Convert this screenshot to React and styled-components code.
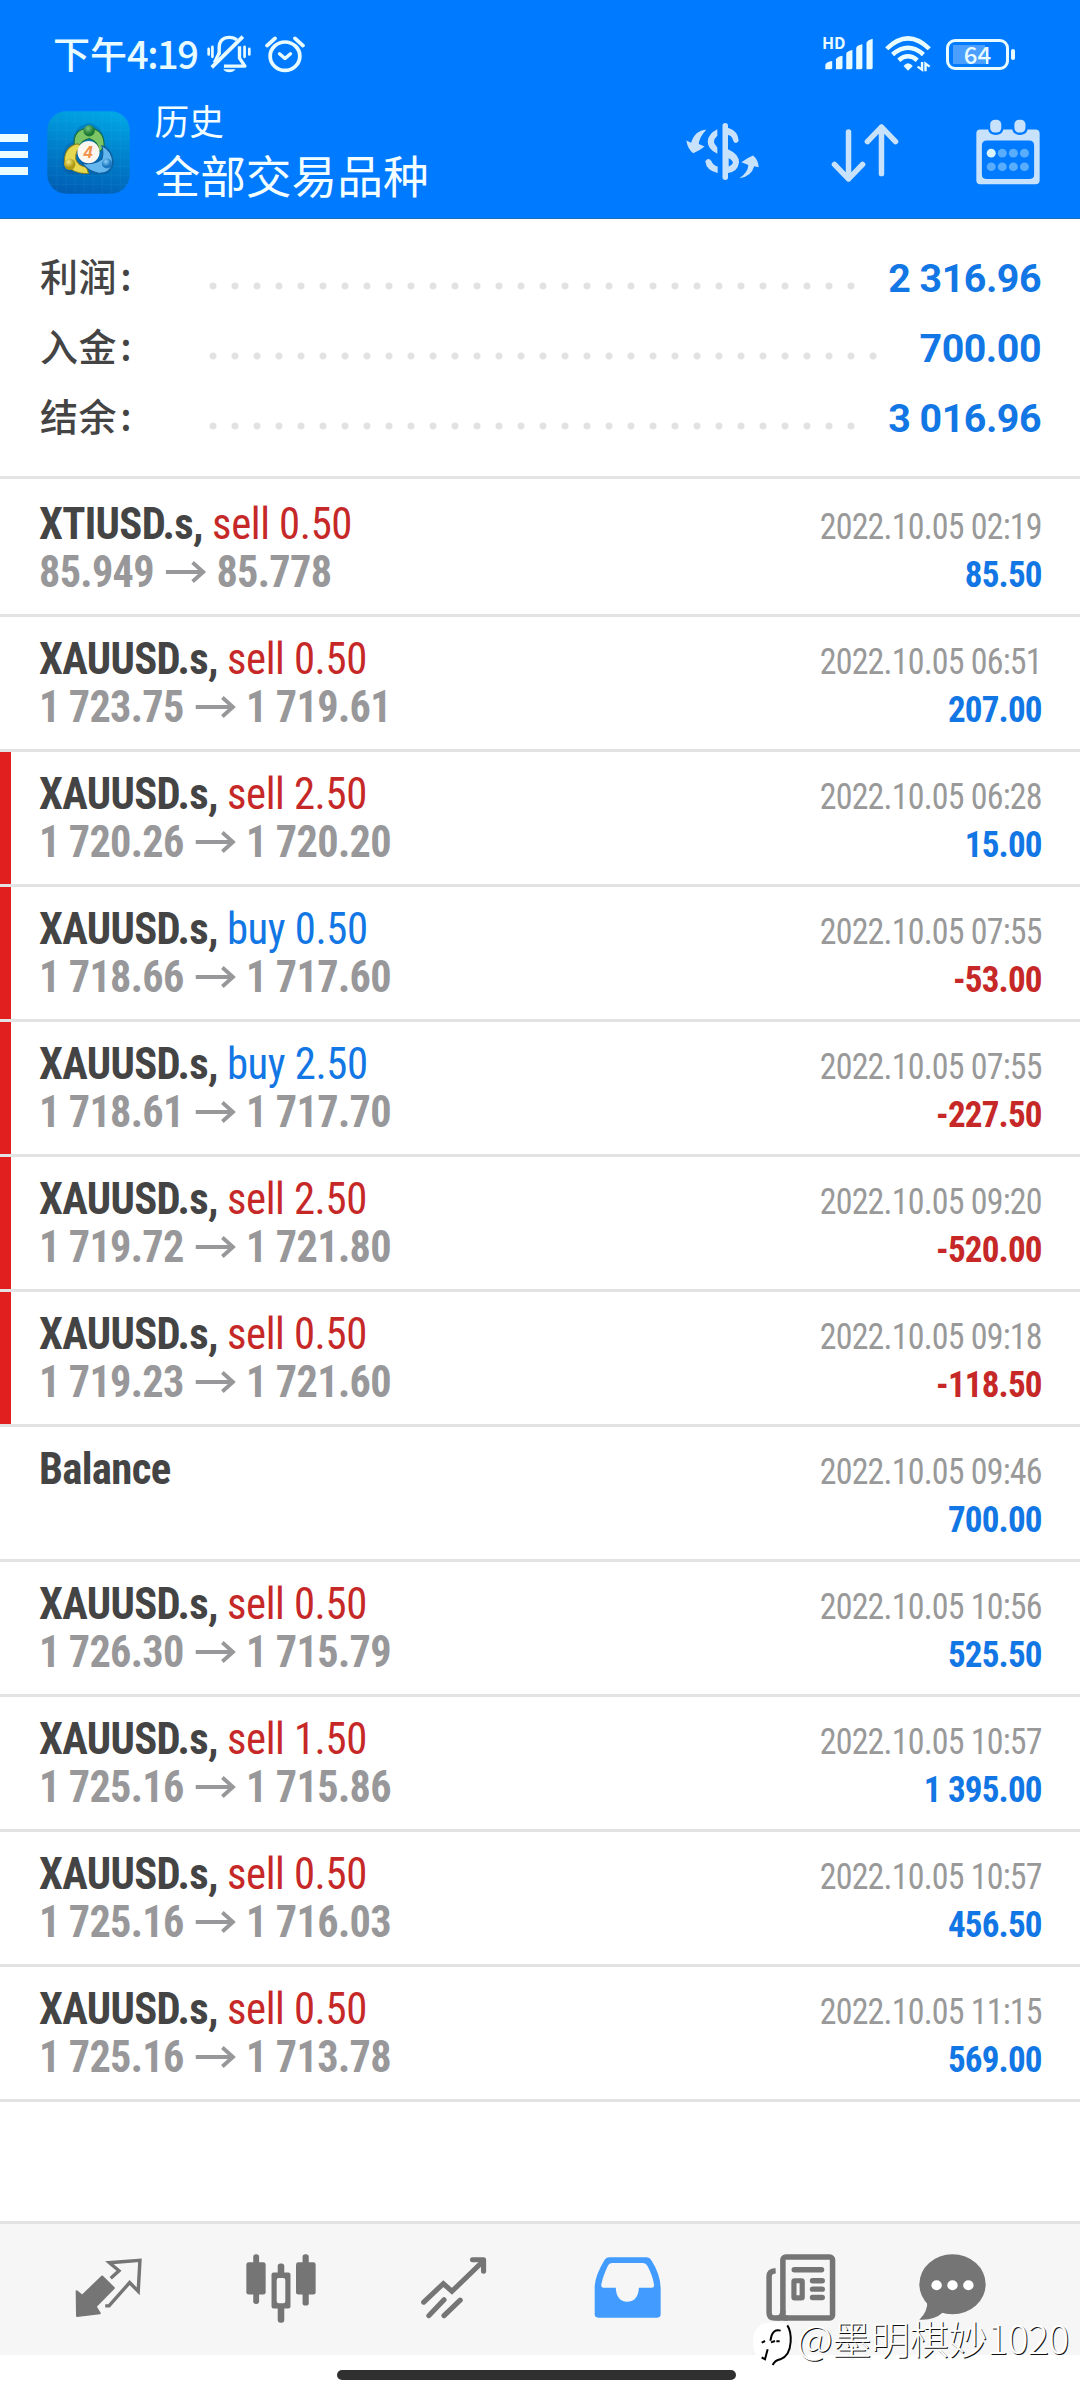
import React from 'react';
import styled, {createGlobalStyle} from 'styled-components';

const GlobalStyle = createGlobalStyle`
  * {
    box-sizing: border-box;
  }

  body {
    margin: 0;
    background-color: #fff;
    font-family: Roboto, 'Noto Sans CJK SC', sans-serif;
  }
`;

const summary = [
  {label: '利润', value: '2 316.96', dots: 30},
  {label: '入金', value: '700.00', dots: 31},
  {label: '结余', value: '3 016.96', dots: 30},
];

const deals = [
  {symbol: 'XTIUSD.s', type: 'sell', lots: '0.50', from: '85.949', to: '85.778', time: '2022.10.05 02:19', profit: '85.50'},
  {symbol: 'XAUUSD.s', type: 'sell', lots: '0.50', from: '1 723.75', to: '1 719.61', time: '2022.10.05 06:51', profit: '207.00'},
  {symbol: 'XAUUSD.s', type: 'sell', lots: '2.50', from: '1 720.26', to: '1 720.20', time: '2022.10.05 06:28', profit: '15.00', marked: true},
  {symbol: 'XAUUSD.s', type: 'buy', lots: '0.50', from: '1 718.66', to: '1 717.60', time: '2022.10.05 07:55', profit: '-53.00', marked: true},
  {symbol: 'XAUUSD.s', type: 'buy', lots: '2.50', from: '1 718.61', to: '1 717.70', time: '2022.10.05 07:55', profit: '-227.50', marked: true},
  {symbol: 'XAUUSD.s', type: 'sell', lots: '2.50', from: '1 719.72', to: '1 721.80', time: '2022.10.05 09:20', profit: '-520.00', marked: true},
  {symbol: 'XAUUSD.s', type: 'sell', lots: '0.50', from: '1 719.23', to: '1 721.60', time: '2022.10.05 09:18', profit: '-118.50', marked: true},
  {symbol: 'Balance', time: '2022.10.05 09:46', profit: '700.00'},
  {symbol: 'XAUUSD.s', type: 'sell', lots: '0.50', from: '1 726.30', to: '1 715.79', time: '2022.10.05 10:56', profit: '525.50'},
  {symbol: 'XAUUSD.s', type: 'sell', lots: '1.50', from: '1 725.16', to: '1 715.86', time: '2022.10.05 10:57', profit: '1 395.00'},
  {symbol: 'XAUUSD.s', type: 'sell', lots: '0.50', from: '1 725.16', to: '1 716.03', time: '2022.10.05 10:57', profit: '456.50'},
  {symbol: 'XAUUSD.s', type: 'sell', lots: '0.50', from: '1 725.16', to: '1 713.78', time: '2022.10.05 11:15', profit: '569.00'},
];

const Screen = styled.div`
  position: relative;
  display: flex;
  flex-direction: column;
  width: 1080px;
  height: 2400px;
  overflow: hidden;
  background-color: #fff;
`;

// header
const Header = styled.header`
  height: 219px;
  background-color: #007aff;
  border-bottom: 1px solid #1b6fb8;
`;

const StatusBar = styled.div`
  display: flex;
  align-items: center;
  height: 108px;
  padding: 0 65px 0 53px;
  color: #e8fbff;
`;

const Clock = styled.span`
  margin-top: -3px;
  margin-right: 10px;
  font-weight: 500;
  font-size: 37px;
  font-family: 'Noto Sans CJK SC', sans-serif;
  line-height: 54px;
  white-space: nowrap;

  & span {
    font-size: 38px;
    letter-spacing: -1.5px;
  }
`;

const StatusRight = styled.div`
  display: flex;
  align-items: center;
  margin-left: auto;
`;

const Icon = styled.svg`
  display: block;
  flex: none;
  width: ${(props) => props.$w}px;
  height: ${(props) => props.$h}px;
  margin-left: ${(props) => props.$left || 0}px;
  margin-top: ${(props) => props.$top || 0}px;
`;

const Battery = styled.div`
  display: flex;
  align-items: center;
  margin-left: 15px;
`;

const BatteryBody = styled.div`
  display: flex;
  align-items: center;
  justify-content: center;
  width: 63px;
  height: 31px;
  border: 3px solid #e8fbff;
  border-radius: 9px;
  background: linear-gradient(#4a9fff, #4a9fff) 4px 3px / 32px 19px no-repeat;
  font-weight: 500;
  font-size: 24px;
  font-family: 'Noto Sans CJK SC', sans-serif;
  line-height: 24px;
`;

const BatteryTip = styled.div`
  width: 4px;
  height: 11px;
  margin-left: 2px;
  border-radius: 2px;
  background-color: #e8fbff;
`;

const Toolbar = styled.div`
  display: flex;
  height: 110px;
  color: #c8e2fc;
`;

const Menu = styled.div`
  display: flex;
  flex-direction: column;
  gap: 9px;
  width: 28px;
  padding-top: 26px;

  & span {
    height: 7.5px;
    background-color: #eafcff;
  }
`;

const Titles = styled.div`
  margin-left: 25px;
  color: #f2feff;
  font-family: 'Noto Sans CJK SC', sans-serif;
`;

const Title = styled.div`
  height: 40px;
  margin-top: -8px;
  font-size: 34.7px;
  line-height: 40px;
`;

const Subtitle = styled.div`
  height: 56px;
  margin-top: 6px;
  font-size: 45.7px;
  line-height: 56px;
`;

const Actions = styled.div`
  display: flex;
  margin-left: auto;
  padding-right: 40px;
`;

// account summary
const Summary = styled.section`
  height: 263px;
  padding: 25px 39px 0 40px;
`;

const SummaryRow = styled.div`
  display: flex;
  height: 70px;
  line-height: 70px;
`;

const SummaryLabel = styled.div`
  width: 162px;
  color: #444;
  font-weight: 500;
  font-size: 38px;
  font-family: 'Noto Sans CJK SC', sans-serif;
  letter-spacing: 0.6px;
  line-height: 62px;

  & span {
    margin-left: 3px;
  }
`;

const Dots = styled.div`
  width: ${(props) => props.$count * 22}px;
  height: 10px;
  margin-top: 37px;
  background: radial-gradient(circle at center, #e2e2e2 3px, transparent 4px) 0 0 / 22px 10px;
`;

const SummaryValue = styled.div`
  margin-left: auto;
  color: #1277e4;
  font-weight: 700;
  font-size: 39.4px;
  letter-spacing: -0.5px;
`;

const Divider = styled.div`
  height: 3px;
  margin-top: 22px;
  margin-right: -39px;
  margin-left: -40px;
  background-color: #e4e4e4;
`;

// deals
const Row = styled.div`
  display: flex;
  justify-content: space-between;
  height: 135px;
  padding: 18px 38px 0 39px;
  border-bottom: 3px solid #e3e3e3;
  background: ${(props) =>
    props.$marked
      ? 'linear-gradient(#e21f1f, #e21f1f) 0 0 / 11px 100% no-repeat padding-box'
      : 'none'};
  font-stretch: 75%;
  letter-spacing: -0.85px;
  white-space: nowrap;
`;

const Main = styled.div`
  transform: scaleX(0.96);
  transform-origin: left;
`;

const Symbol = styled.div`
  height: 48px;
  color: #444;
  font-weight: 700;
  font-size: 44.5px;
  letter-spacing: -0.7px;
  line-height: 48px;
`;

const Lots = styled.span`
  color: ${(props) => (props.$type === 'buy' ? '#1277e4' : '#c62828')};
  font-weight: 400;
  letter-spacing: -0.4px;
`;

const Prices = styled.div`
  display: flex;
  height: 48px;
  color: #98989a;
  font-weight: 700;
  font-size: 44px;
  letter-spacing: -0.7px;
  line-height: 48px;

  & svg {
    margin-right: 11px;
  }
`;

const Side = styled.div`
  padding-top: 3px;
  text-align: right;
`;

const Time = styled.div`
  height: 48px;
  color: #999;
  font-size: 36.5px;
  line-height: 48px;
  transform: scaleX(0.93);
  transform-origin: right;
`;

const Profit = styled.div`
  height: 48px;
  color: ${(props) => (props.$loss ? '#c62828' : '#1277e4')};
  font-weight: 700;
  font-size: 36.5px;
  line-height: 48px;
  transform: scaleX(0.96);
  transform-origin: right;
`;

// bottom bar
const TabBar = styled.nav`
  display: flex;
  align-items: flex-start;
  height: 134px;
  margin-top: auto;
  padding-top: 30px;
  border-top: 3px solid #e2e2e2;
  background-color: #f6f6f6;
  color: #757575;
`;

const HomeArea = styled.div`
  height: 45px;
  padding-top: 15px;
`;

const HomeBar = styled.div`
  width: 399px;
  height: 10px;
  margin-left: 337px;
  border-radius: 5px;
  background-color: #303030;
`;

const Watermark = styled.div`
  position: absolute;
  top: 2307px;
  left: 753px;
  display: flex;
  align-items: center;
  color: #fff;
  font-weight: 300;
  font-size: 39.2px;
  font-family: 'Noto Sans CJK SC', sans-serif;
  letter-spacing: -0.5px;
  line-height: 54px;
  text-shadow: 1px 1px 0 #111;
  white-space: nowrap;
`;

const BellOffIcon = () => (
  <Icon $w={44} $h={38} viewBox="600 106 130 115" preserveAspectRatio="none" fill="none" stroke="currentColor">
    <path d="M636 165V144C636 124 648 113 666 113C676 113 683 116 688 121" strokeWidth="10" />
    <path d="M614 204L706 111" strokeWidth="11" />
    <path d="M696 140V176L712 200H650" strokeWidth="10" strokeLinejoin="round" />
    <path d="M636 160L622 190" strokeWidth="10" />
    <path d="M648 210H684C678 222 654 222 648 210Z" fill="currentColor" stroke="none" />
    <path d="M605 148V165M616 142V172M711 142V172M725 148V165" strokeWidth="8" strokeLinecap="round" />
  </Icon>
);

const AlarmIcon = () => (
  <Icon $w={40} $h={37} $left={14} viewBox="771 105 116 112" preserveAspectRatio="none" fill="none" stroke="currentColor">
    <circle cx="829" cy="166" r="43" strokeWidth="11" />
    <path d="M777 134L800 112M881 134L858 112" strokeWidth="11" strokeLinecap="round" />
    <path d="M813 159L829 173L845 159" strokeWidth="10" strokeLinecap="round" strokeLinejoin="round" />
  </Icon>
);

const HdLabel = styled.span`
  align-self: flex-start;
  width: 24px;
  margin-right: -21px;
  margin-top: -2px;
  font-weight: 700;
  font-size: 16px;
  font-family: 'Noto Sans CJK SC', sans-serif;
  line-height: 16px;
`;

const SignalIcon = () => (
  <Icon $w={48} $h={32} viewBox="825 116 140 96" preserveAspectRatio="none" fill="currentColor">
    <path d="M826 210V196Q830 187 846 185V205Q846 210 840 210Z" />
    <path d="M857 210V180Q861 171 876 169V205Q876 210 870 210Z" />
    <path d="M887 210V163Q891 154 905 152V205Q905 210 899 210Z" />
    <path d="M916 210V146Q920 137 934 135V205Q934 210 928 210Z" />
    <path d="M946 210V130Q950 121 964 118V205Q964 210 958 210Z" />
  </Icon>
);

const WifiIcon = () => (
  <Icon $w={46} $h={36} $left={12} viewBox="1001 111 134 107" preserveAspectRatio="none" fill="none" stroke="currentColor">
    <path d="M1006 149Q1068 87 1130 149" strokeWidth="13" />
    <path d="M1023 166Q1068 126 1113 166" strokeWidth="13" />
    <path d="M1041 183Q1068 160 1095 183" strokeWidth="13" />
    <path d="M1055 200Q1068 184 1082 200L1068 214Z" fill="currentColor" stroke="none" />
    <path d="M1109 188V211L1096 202M1119 216V193L1131 202" strokeWidth="7" />
  </Icon>
);

const LogoIcon = () => (
  <Icon $w={83} $h={83} $left={18.5} $top={3} viewBox="50 50 248 248">
    <defs>
      <linearGradient id="logoBg" x1="0.6" y1="0" x2="0.4" y2="1">
        <stop offset="0" stopColor="#00a5e4" />
        <stop offset="0.5" stopColor="#007fca" />
        <stop offset="1" stopColor="#005fb4" />
      </linearGradient>
      <radialGradient id="logoGreen" cx="0.4" cy="0.3">
        <stop offset="0" stopColor="#7cc67c" />
        <stop offset="1" stopColor="#1d7a34" />
      </radialGradient>
      <radialGradient id="logoYellow" cx="0.4" cy="0.3">
        <stop offset="0" stopColor="#f4ea7c" />
        <stop offset="1" stopColor="#b09a14" />
      </radialGradient>
      <radialGradient id="logoBlue" cx="0.4" cy="0.3">
        <stop offset="0" stopColor="#8ad0f8" />
        <stop offset="1" stopColor="#1a76c0" />
      </radialGradient>
    </defs>
    <rect x="51" y="51" width="246" height="246" rx="56" fill="url(#logoBg)" />
    <path
      d="M80 55V293M107 51V297M134 51V297M161 51V297M188 51V297M215 51V297M242 51V297M269 55V293M55 80H293M51 107H297M51 134H297M51 161H297M51 188H297M51 215H297M51 242H297M55 269H293"
      stroke="#4fc0f0"
      strokeWidth="1.5"
      opacity="0.2"
    />
    <path d="M98 220Q90 180 108 152L128 140Q128 96 176 86Q222 98 222 150Q250 172 250 210Q246 238 214 240H130Q106 240 98 220Z" fill="#00447e" opacity="0.25" />
    <path d="M132 158Q126 112 160 104H192Q224 116 220 160L206 172Q204 140 176 132Q150 138 146 160Z" fill="#7cc464" stroke="#176d38" strokeWidth="3" />
    <path d="M102 206Q100 156 142 148L154 156Q134 166 136 194Q142 214 168 218L174 236Q130 240 102 206Z" fill="#e6d850" stroke="#8a7f18" strokeWidth="3" />
    <path d="M214 154Q248 170 246 208Q236 238 204 236Q170 228 156 206Q190 212 214 194Q220 176 214 154Z" fill="#64b6ee" stroke="#125c9c" strokeWidth="3" />
    <circle cx="176" cy="109" r="17" fill="url(#logoGreen)" />
    <circle cx="118" cy="209" r="17" fill="url(#logoYellow)" />
    <circle cx="229" cy="207" r="15" fill="url(#logoBlue)" />
    <circle cx="174" cy="173" r="33" fill="#fbf6f0" />
    <text x="173" y="190" textAnchor="middle" fill="#f09048" fontFamily="Liberation Sans, sans-serif" fontWeight="700" fontStyle="italic" fontSize="50">4</text>
  </Icon>
);

const CurrencyIcon = () => (
  <Icon $w={73} $h={57} $top={15} viewBox="422 370 212 170" preserveAspectRatio="none" fill="currentColor">
    <path d="M536 378V532" stroke="currentColor" strokeWidth="16" strokeLinecap="round" />
    <path d="M544 384Q574 394 575 423Q566 436 559 423Q556 408 544 406Z" />
    <path d="M513 389V408Q494 425 513 443V462Q485 448 485 425Q487 402 513 389Z" />
    <path d="M478 484Q487 470 496 484Q500 496 514 500V519Q481 512 478 484Z" />
    <path fillRule="evenodd" d="M544 448Q577 463 576 488Q572 516 544 519ZM546 475V500Q570 488 546 475Z" />
    <path d="M481 390Q447 392 437 429L423 422Q427 448 443 460Q462 452 476 440L459 433Q461 411 481 390Z" />
    <path d="M577 535Q602 517 603 495L583 487Q599 474 617 467Q632 480 633 502L620 499Q612 530 577 535Z" />
  </Icon>
);

const SortIcon = () => (
  <Icon $w={68} $h={60} $left={72.5} $top={15} viewBox="845 368 198 180" preserveAspectRatio="none" fill="none" stroke="currentColor" strokeWidth="16" strokeLinecap="round" strokeLinejoin="round">
    <path d="M896 395V536M855 492L896 536L937 492" />
    <path d="M992 520V380M951 424L992 380L1033 424" />
  </Icon>
);

const CalendarIcon = () => (
  <Icon $w={64} $h={66} $left={77} $top={10.5} viewBox="1268 355 185 199" preserveAspectRatio="none" fill="currentColor">
    <path
      fillRule="evenodd"
      d="M1280 387H1303Q1306 403 1325 403Q1344 403 1347 387H1373Q1376 403 1395 403Q1414 403 1417 387H1440Q1452 387 1452 399V540Q1452 552 1440 552H1280Q1269 552 1269 540V399Q1269 387 1280 387ZM1300 420Q1285 420 1285 435V522Q1285 536 1300 536H1421Q1436 536 1436 522V435Q1436 420 1421 420Z"
    />
    <rect x="1309" y="357" width="32" height="39" rx="14" />
    <rect x="1379" y="357" width="32" height="39" rx="14" />
    <circle cx="1312" cy="458" r="13" fill="#d8f4ff" />
    <g fill="#58adff">
      <circle cx="1344" cy="458" r="13" />
      <circle cx="1376" cy="458" r="13" />
      <circle cx="1408" cy="458" r="13" />
      <circle cx="1312" cy="499" r="13" />
      <circle cx="1344" cy="499" r="13" />
      <circle cx="1376" cy="499" r="13" />
      <circle cx="1408" cy="499" r="13" />
    </g>
  </Icon>
);

const ArrowIcon = () => (
  <Icon $w={42} $h={22} $left={12} $top={13} viewBox="0 0 42 22" fill="none" stroke="currentColor" strokeWidth="4">
    <path d="M0 11H39M28 1.5L39 11L28 20.5" />
  </Icon>
);

const QuotesIcon = () => (
  <Icon $w={67} $h={60} $left={75} $top={4} viewBox="218 176 195 178" preserveAspectRatio="none" fill="none" stroke="currentColor">
    <path d="M223 275L239 288L297 231L331 265L278 320L290 340L224 348Z" fill="currentColor" strokeWidth="6" strokeLinejoin="round" />
    <path d="M322 236L346 214L318 190L407 183L402 275L377 249L317 318H306" strokeWidth="10" />
  </Icon>
);

const ChartIcon = () => (
  <Icon $w={70} $h={69} $left={104} viewBox="715 161 203 206" preserveAspectRatio="none" fill="currentColor">
    <rect x="736" y="162" width="17" height="148" rx="8" />
    <rect x="716" y="186" width="56" height="96" rx="7" />
    <rect x="879" y="162" width="18" height="153" rx="8" />
    <rect x="860" y="186" width="57" height="96" rx="7" />
    <rect x="807" y="189" width="19" height="40" rx="8" />
    <rect x="807" y="310" width="19" height="56" rx="8" />
    <path fillRule="evenodd" d="M795 216H838Q844 216 844 222V318Q844 324 838 324H795Q789 324 789 318V222Q789 216 795 216ZM810 233Q804 233 804 239V302Q804 308 810 308H823Q829 308 829 302V239Q829 233 823 233Z" />
  </Icon>
);

const TradeIcon = () => (
  <Icon $w={66} $h={62} $left={105} $top={3} viewBox="1223 170 192 184" preserveAspectRatio="none" fill="none" stroke="currentColor" strokeWidth="15" strokeLinecap="round">
    <path d="M1231 304L1288 249L1313 272L1402 184" />
    <path d="M1373 178H1405V212" strokeLinejoin="round" />
    <path d="M1246 344L1290 297M1290 344L1337 298" />
  </Icon>
);

const HistoryIcon = () => (
  <Icon $w={67} $h={61} $left={107} $top={3} viewBox="157 169 194 183" preserveAspectRatio="none" fill="#429bff">
    <path
      fillRule="evenodd"
      d="M202 170H308Q318 170 323 179Q350 222 350 265V341Q350 351 340 351H169Q159 351 159 341V255Q162 222 187 179Q192 170 202 170ZM210 187Q201 187 197 196Q183 226 178 252Q177 261 184 261H220Q222 302 253 303Q285 302 287 261H325Q332 261 331 252Q327 226 312 196Q307 187 299 187Z"
    />
  </Icon>
);

const NewsIcon = () => (
  <Icon $w={70} $h={67} $left={105} viewBox="657 161 203 200" preserveAspectRatio="none" fill="none" stroke="currentColor" strokeWidth="16">
    <rect x="706" y="170" width="144" height="182" rx="8" />
    <path d="M685 211Q666 212 666 228V336Q666 352 682 352H720" />
    <path d="M706 330Q706 352 690 352" />
    <path d="M739 208H818M792 241H820M792 266H820M792 291H820" strokeLinecap="round" />
    <rect x="738" y="241" width="24" height="51" rx="2" strokeWidth="15" />
  </Icon>
);

const ChatIcon = () => (
  <Icon $w={67} $h={67} $left={83} viewBox="1102 161 194 201" preserveAspectRatio="none" fill="currentColor">
    <ellipse cx="1199" cy="252" rx="96" ry="90" />
    <path d="M1126 300Q1128 335 1103 358Q1145 361 1172 336Z" />
    <g fill="#fff">
      <circle cx="1153" cy="255" r="15" />
      <circle cx="1199" cy="255" r="15" />
      <circle cx="1245" cy="255" r="15" />
    </g>
  </Icon>
);

const WatermarkIcon = () => (
  <Icon $w={44} $h={44} $top={15} viewBox="40 240 132 132" fill="none">
    <path d="M66 246Q100 236 134 244Q158 256 158 294Q156 336 128 350Q100 372 66 356Q40 338 40 300Q42 260 66 246Z" fill="#fff" />
    <path d="M143 250Q155 268 153 300Q150 342 122 352Q106 355 99 369" stroke="#000" strokeWidth="6" />
    <path d="M123 266Q104 260 96 280L92 296M66 302L76 297M94 301L106 297M110 298H120M84 322L76 352L66 346" stroke="#000" strokeWidth="6" />
  </Icon>
);

const Deal = ({deal}) => (
  <Row $marked={deal.marked}>
    <Main>
      <Symbol>
        {deal.symbol}
        {deal.type && (
          <>
            , <Lots $type={deal.type}>{deal.type} {deal.lots}</Lots>
          </>
        )}
      </Symbol>
      {deal.from && (
        <Prices>
          {deal.from}
          <ArrowIcon />
          {deal.to}
        </Prices>
      )}
    </Main>
    <Side>
      <Time>{deal.time}</Time>
      <Profit $loss={deal.profit.startsWith('-')}>{deal.profit}</Profit>
    </Side>
  </Row>
);

const App = () => (
  <Screen>
    <GlobalStyle />
    <Header>
      <StatusBar>
        <Clock>
          下午<span>4:19</span>
        </Clock>
        <BellOffIcon />
        <AlarmIcon />
        <StatusRight>
          <HdLabel>HD</HdLabel>
          <SignalIcon />
          <WifiIcon />
          <Battery>
            <BatteryBody>64</BatteryBody>
            <BatteryTip />
          </Battery>
        </StatusRight>
      </StatusBar>
      <Toolbar>
        <Menu>
          <span />
          <span />
          <span />
        </Menu>
        <LogoIcon />
        <Titles>
          <Title>历史</Title>
          <Subtitle>全部交易品种</Subtitle>
        </Titles>
        <Actions>
          <CurrencyIcon />
          <SortIcon />
          <CalendarIcon />
        </Actions>
      </Toolbar>
    </Header>
    <Summary>
      {summary.map((item) => (
        <SummaryRow key={item.label}>
          <SummaryLabel>
            {item.label}
            <span>:</span>
          </SummaryLabel>
          <Dots $count={item.dots} />
          <SummaryValue>{item.value}</SummaryValue>
        </SummaryRow>
      ))}
      <Divider />
    </Summary>
    {deals.map((deal, index) => (
      <Deal key={index} deal={deal} />
    ))}
    <TabBar>
      <QuotesIcon />
      <ChartIcon />
      <TradeIcon />
      <HistoryIcon />
      <NewsIcon />
      <ChatIcon />
    </TabBar>
    <HomeArea>
      <HomeBar />
    </HomeArea>
    <Watermark>
      <WatermarkIcon />
      @墨明棋妙1020
    </Watermark>
  </Screen>
);

export default App;
